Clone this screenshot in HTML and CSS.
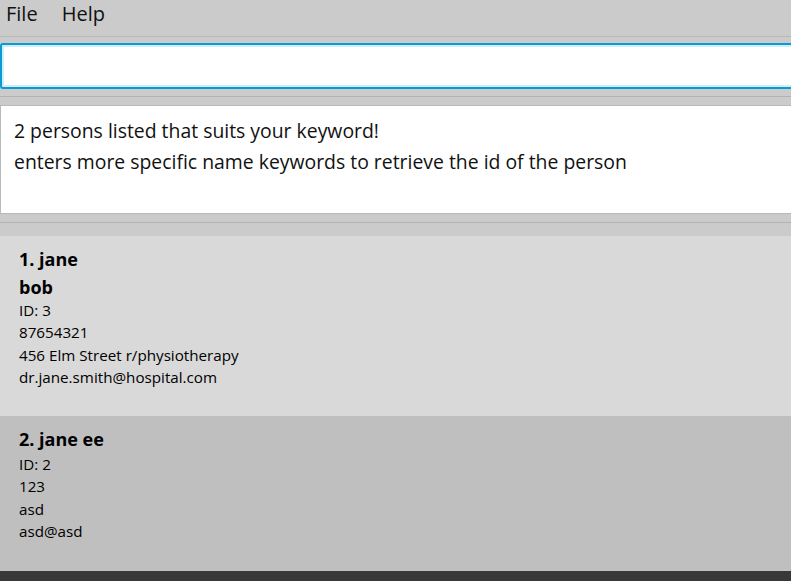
FILE: index.html
```html
<!DOCTYPE html>
<html>
<head>
<meta charset="utf-8">
<link rel="stylesheet" href="styles.css">
</head>
<body>
<div class="app">
  <div class="menubar">
    <span class="menu-item">File</span>
    <span class="menu-item">Help</span>
  </div>
  <div class="command-pane">
    <div class="command-box"></div>
  </div>
  <div class="result-pane">
    <div class="result-box">
      <div>2 persons listed that suits your keyword!</div>
      <div>enters more specific name keywords to retrieve the id of the person</div>
    </div>
  </div>
  <div class="list-pane">
    <div class="card card-even">
      <div class="card-title">1. jane</div>
      <div class="card-sub">bob</div>
      <div class="card-line">ID: 3</div>
      <div class="card-line">87654321</div>
      <div class="card-line">456 Elm Street r/physiotherapy</div>
      <div class="card-line">dr.jane.smith@hospital.com</div>
    </div>
    <div class="card card-odd">
      <div class="card-title">2. jane ee</div>
      <div class="card-line">ID: 2</div>
      <div class="card-line">123</div>
      <div class="card-line">asd</div>
      <div class="card-line">asd@asd</div>
    </div>
  </div>
  <div class="statusbar"></div>
</div>
</body>
</html>
```
FILE: styles.css
```css
* { box-sizing: border-box; }
html, body {
  margin: 0;
  padding: 0;
  width: 791px;
  height: 581px;
  overflow: hidden;
  background: #cbcbcb;
  font-family: "Open Sans", "Noto Sans", sans-serif;
  color: #000;
}
.app {
  display: flex;
  flex-direction: column;
  height: 581px;
}
.menubar {
  height: 37px;
  background: #cbcbcb;
  border-bottom: 1px solid #b8b8b8;
  display: flex;
  align-items: flex-start;
  padding-left: 6px;
  font-size: 20px;
  line-height: 28px;
}
.menu-item {
  margin-right: 24px;
  color: #111;
}
.command-pane {
  padding-top: 6px;
  padding-bottom: 7px;
  border-bottom: 1px solid #b3b3b3;
  overflow: hidden;
}
.command-box {
  width: calc(100% + 20px);
  height: 46px;
  background: #fff;
  border: 2px solid #0a9bd3;
  border-radius: 3px;
  box-shadow: inset 0 0 0 2px #cdeefa;
}
.result-pane {
  padding-top: 8px;
  padding-bottom: 8px;
  border-bottom: 1px solid #b3b3b3;
  overflow: hidden;
}
.result-box {
  width: calc(100% + 20px);
  height: 109px;
  background: #fff;
  border: 1px solid #b9b9b9;
  padding: 9px 13px 0;
  font-size: 19.4px;
  line-height: 31px;
  color: #111;
  white-space: nowrap;
}
.list-pane {
  flex: 1;
  padding-top: 13px;
  display: flex;
  flex-direction: column;
}
.card {
  padding: 9px 19px 0;
}
.card-even {
  height: 180px;
  background: #d9d9d9;
}
.card-odd {
  flex: 1;
  background: #bfbfbf;
}
.card-title {
  font-size: 18px;
  font-weight: 700;
  line-height: 28px;
}
.card-sub {
  font-size: 18px;
  font-weight: 700;
  line-height: 24px;
  margin-top: 2px;
}
.card-line {
  font-size: 15.2px;
  line-height: 22.3px;
}
.statusbar {
  height: 10px;
  background: #383838;
}
```
